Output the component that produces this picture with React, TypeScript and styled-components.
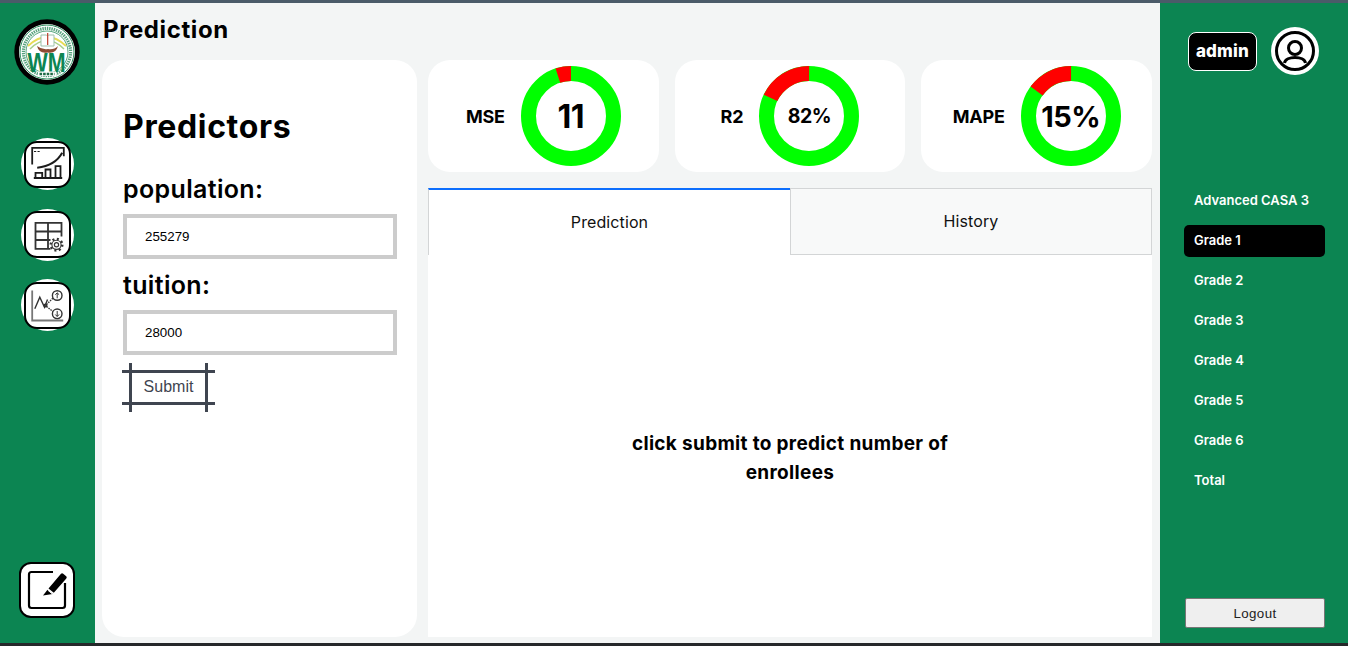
import React from "react";
import styled, { createGlobalStyle } from "styled-components";

const GREEN = "#0c8552";
const HEAD = `"Inter", "Open Sans", "Liberation Sans", sans-serif`;
const ARIAL = `"Liberation Sans", Arial, sans-serif`;

const Global = createGlobalStyle`
  html, body { margin: 0; padding: 0; background: #222; }
  * { box-sizing: border-box; }
  body { font-family: ${HEAD}; overflow: hidden; }
`;

const Frame = styled.div`
  width: 1348px;
  height: 646px;
  display: flex;
  flex-direction: column;
  background: #222;
`;
const TopStrip = styled.div`
  height: 3px;
  background: #4b5b69;
  flex: none;
`;
const BottomStrip = styled.div`
  height: 3px;
  background: #26282a;
  flex: none;
`;
const Body = styled.div`
  flex: 1;
  min-height: 0;
  display: flex;
`;
const LeftRail = styled.nav`
  width: 95px;
  flex: none;
  background: ${GREEN};
  display: flex;
  flex-direction: column;
  align-items: center;
  padding: 16px 0 25px;
`;
const Logo = styled.svg`
  display: block;
  margin-right: 2px;
  flex: none;
`;
const RailIcons = styled.div`
  display: flex;
  flex-direction: column;
  gap: 18.5px;
  margin-top: 53px;
`;
const RailCircle = styled.div`
  width: 53px;
  height: 52px;
  border-radius: 50%;
  background: #fff;
  display: flex;
  align-items: center;
  justify-content: center;
`;
const RailSquare = styled.div`
  width: 47px;
  height: 47px;
  border: 2.5px solid #000;
  border-radius: 13px;
  background: #fff;
  display: flex;
  align-items: center;
  justify-content: center;
`;
const EditButton = styled.div`
  margin: auto 1px 0 0;
  width: 56px;
  height: 56px;
  border: 2px solid #000;
  border-radius: 12px;
  background: #fff;
  display: flex;
  align-items: center;
  justify-content: center;
`;
const Main = styled.main`
  flex: 1;
  min-width: 0;
  background: #f3f5f5;
  display: flex;
  flex-direction: column;
  padding: 0 8px 6px 7px;
`;
const PageTitle = styled.h1`
  height: 57px;
  margin: 0;
  padding: 11px 0 0 1px;
  font-size: 24px;
  line-height: 32px;
  font-weight: 700;
  letter-spacing: 0.6px;
  color: #000;
`;
const Columns = styled.div`
  flex: 1;
  min-height: 0;
  display: grid;
  grid-template-columns: 315px 1fr;
  gap: 11px;
`;
const FormCard = styled.section`
  background: #fff;
  border-radius: 22px;
  padding: 45px 21px 0;
`;
const FormTitle = styled.h2`
  margin: 0 0 24px;
  font-size: 32px;
  line-height: 44px;
  font-weight: 700;
  letter-spacing: 0.65px;
  color: #000;
`;
const FieldLabel = styled.label`
  display: block;
  font-size: 25px;
  line-height: 32px;
  font-weight: 600;
  letter-spacing: 0.35px;
  color: #000;
  height: 41px;
`;
const Field = styled.input`
  display: block;
  width: 274px;
  height: 45px;
  border: 4px solid #ccc;
  background: #fff;
  padding: 0 18px;
  margin-bottom: 10px;
  font-family: ${ARIAL};
  font-size: 13.33px;
  color: #000;
  outline: none;
`;
const Submit = styled.button`
  position: relative;
  display: block;
  width: 93px;
  height: 35px;
  margin: 15px 0 0 -1px;
  padding: 0 0 2px;
  background: #fff;
  border: 0;
  border-top: 3px solid #3f4550;
  border-bottom: 3px solid #3f4550;
  font-family: ${ARIAL};
  font-size: 16px;
  color: #3f4550;
  &::before {
    content: "";
    position: absolute;
    left: 7px;
    right: 7px;
    top: -10px;
    bottom: -10px;
    border-left: 3px solid #3f4550;
    border-right: 3px solid #3f4550;
  }
`;
const RightColumn = styled.div`
  display: flex;
  flex-direction: column;
  min-width: 0;
`;
const Stats = styled.div`
  display: grid;
  grid-template-columns: repeat(3, 1fr);
  gap: 16px;
  margin-bottom: 16px;
`;
const StatCard = styled.div`
  height: 112px;
  background: #fff;
  border-radius: 22px;
  display: flex;
  align-items: center;
  justify-content: center;
  gap: 16px;
`;
const StatLabel = styled.span`
  font-size: 18px;
  font-weight: 700;
  letter-spacing: -0.2px;
  color: #000;
`;
const DonutWrap = styled.div`
  position: relative;
  width: 100px;
  height: 100px;
  flex: none;
`;
const DonutValue = styled.span<{ $size: number }>`
  position: absolute;
  inset: 0;
  display: flex;
  align-items: center;
  justify-content: center;
  font-size: ${(p) => p.$size}px;
  font-weight: 700;
  letter-spacing: -0.5px;
  color: #000;
`;
const Tabs = styled.div`
  display: grid;
  grid-template-columns: 1fr 1fr;
  height: 67px;
  flex: none;
`;
const Tab = styled.div<{ $active?: boolean }>`
  display: flex;
  align-items: center;
  justify-content: center;
  padding-bottom: 2px;
  font-size: 16px;
  letter-spacing: 0.1px;
  color: #111;
  background: ${(p) => (p.$active ? "#fff" : "#f8f9f9")};
  border: 1px solid #d3d5d6;
  border-top: ${(p) => (p.$active ? "2px solid #0d6efd" : "1px solid #d3d5d6")};
  border-bottom: ${(p) => (p.$active ? "0" : "1px solid #d3d5d6")};
  border-right: ${(p) => (p.$active ? "0" : "1px solid #d3d5d6")};
`;
const Panel = styled.div`
  flex: 1;
  background: #fff;
  display: flex;
  align-items: center;
  justify-content: center;
  padding-top: 24px;
`;
const PanelText = styled.p`
  width: 340px;
  margin: 0;
  text-align: center;
  font-size: 19px;
  line-height: 29px;
  font-weight: 700;
  letter-spacing: 0.32px;
  color: #000;
`;
const RightRail = styled.aside`
  width: 188px;
  flex: none;
  background: ${GREEN};
  display: flex;
  flex-direction: column;
  padding: 24px 23px 15px 24px;
`;
const UserRow = styled.div`
  display: flex;
  align-items: center;
  gap: 14px;
  padding-left: 4px;
`;
const AdminBadge = styled.div`
  width: 69px;
  height: 39px;
  background: #000;
  border: 1.5px solid #fff;
  border-radius: 8px;
  color: #fff;
  font-size: 17px;
  font-weight: 800;
  letter-spacing: 0.2px;
  display: flex;
  align-items: center;
  justify-content: center;
`;
const SideNav = styled.ul`
  list-style: none;
  margin: 110px 0 0;
  padding: 0;
  display: flex;
  flex-direction: column;
  gap: 8px;
`;
const SideItem = styled.li<{ $active?: boolean }>`
  height: 32px;
  border-radius: 5px;
  padding: 0 0 2px 10px;
  display: flex;
  align-items: center;
  color: #fff;
  font-size: 13px;
  font-weight: 600;
  background: ${(p) => (p.$active ? "#000" : "transparent")};
`;
const Logout = styled.button`
  margin-top: auto;
  margin-left: 1px;
  width: 140px;
  height: 30px;
  background: #efefef;
  border: 1px solid #767676;
  border-radius: 2px;
  font-family: ${ARIAL};
  font-size: 13.33px;
  letter-spacing: 0.4px;
  color: #222;
`;

function Donut({ red, value, size }: { red: number; value: string; size: number }) {
  const r = 42.5;
  const c = 2 * Math.PI * r;
  const len = (red / 100) * c;
  return (
    <DonutWrap>
      <svg width="100" height="100" viewBox="0 0 100 100">
        <circle cx="50" cy="50" r={r} fill="none" stroke="#00ff00" strokeWidth="15" />
        <circle
          cx="50"
          cy="50"
          r={r}
          fill="none"
          stroke="#ff0000"
          strokeWidth="15"
          strokeDasharray={`${len} ${c - len}`}
          transform={`rotate(${-90 - (red / 100) * 360} 50 50)`}
        />
      </svg>
      <DonutValue $size={size}>{value}</DonutValue>
    </DonutWrap>
  );
}

const grades = ["Advanced CASA 3", "Grade 1", "Grade 2", "Grade 3", "Grade 4", "Grade 5", "Grade 6", "Total"];

export default function App() {
  return (
    <Frame>
      <Global />
      <TopStrip />
      <Body>
        <LeftRail>
          <Logo width="66" height="66" viewBox="0 0 66 66">
            <circle cx="33" cy="33" r="32.7" fill="#000" />
            <circle cx="33" cy="33" r="28" fill="#fff" />
            <circle cx="33" cy="33" r="27" fill="none" stroke="#2f9160" strokeWidth="1" />
            <circle cx="33" cy="33" r="23.6" fill="none" stroke="#2d8a5c" strokeWidth="3.2" strokeDasharray="1.4 0.9" opacity="0.8" />
            <circle cx="33" cy="33" r="21" fill="#fff" stroke="#2f9160" strokeWidth="0.8" />
            <path d="M14 27Q33 9 52 27" fill="none" stroke="#e8dc55" strokeWidth="2" />
            <path d="M16 30Q33 13 50 30" fill="none" stroke="#a9cf8b" strokeWidth="1.5" />
            <path d="M27 16h5.5l1 1 1-1H40v11H27z" fill="#fff" stroke="#9fc0ad" strokeWidth="1" />
            <rect x="33" y="14" width="1.3" height="12" fill="#c24a3a" />
            <path d="M23 27Q25 35 33.5 33.5Q42 35 44 27Q40 31 34 30Q28 31 23 27z" fill="#8d4a33" />
            <text x="32.5" y="53" textAnchor="middle" fontFamily={ARIAL} fontWeight="700" fontSize="27" textLength="38" lengthAdjust="spacingAndGlyphs" fill="#0c8552">WM</text>
            <rect x="24" y="52.5" width="18" height="4.5" fill="#fff" />
            <path d="M25.5 55H40.5" stroke="#1d6a45" strokeWidth="2.4" strokeDasharray="2.6 1" />
          </Logo>
          <RailIcons>
            <RailCircle>
              <RailSquare>
                <svg width="42" height="42" viewBox="2.5 2.5 42 42" fill="none" stroke="#1c1c1c" strokeWidth="1.8">
                  <path d="M7.7 24V7.3H39.3V15.7" />
                  <path d="M9.5 11h2.2M13 11h2.2" strokeWidth="1.2" />
                  <path d="M12.7 27.3C24 26 33 21 37.7 12.3" strokeWidth="2" />
                  <path d="M9.3 37.5H37.7" strokeWidth="2" />
                  <path d="M11 37V32.3H17.7V37M21 37V29H26V37M31 37V25.7H36V37" />
                </svg>
              </RailSquare>
            </RailCircle>
            <RailCircle>
              <RailSquare>
                <svg width="42" height="42" viewBox="2.5 2.5 42 42" fill="none" stroke="#333" strokeWidth="1.8">
                  <path d="M26 37.3H11V11.3H37V25M11 20H37M11 28.5H26M23.5 11.3V37.3" />
                  <circle cx="32" cy="33.3" r="7" fill="#fff" stroke="none" />
                  <circle cx="32" cy="33.3" r="5.8" strokeWidth="2.4" strokeDasharray="2 2.5" />
                  <circle cx="32" cy="33.3" r="4.6" strokeWidth="1.1" />
                  <circle cx="32" cy="33.3" r="2.1" strokeWidth="1.2" />
                </svg>
              </RailSquare>
            </RailCircle>
            <RailCircle>
              <RailSquare>
                <svg width="42" height="42" viewBox="2.5 2.5 42 42" fill="none" stroke="#333" strokeWidth="1.4">
                  <path d="M7.7 9V39H38.7" stroke="#777" strokeWidth="1.8" />
                  <path d="M10.3 27.3L15.3 15.7L20 25.7L23 18" />
                  <circle cx="21" cy="24" r="1.3" />
                  <path d="M22 23L28.5 16.5M22 25L28.5 30" strokeDasharray="1.5 1" />
                  <circle cx="32.7" cy="14" r="4.8" />
                  <circle cx="32.7" cy="32.3" r="4.8" />
                  <path d="M32.7 16.8V11.5M30.8 13.2L32.7 11.3L34.6 13.2M32.7 29.5V34.8M30.8 33L32.7 35L34.6 33" strokeWidth="1" />
                </svg>
              </RailSquare>
            </RailCircle>
          </RailIcons>
          <EditButton>
            <svg width="52" height="52" viewBox="2 2 52 52" fill="none">
              <path d="M34 10H12.5A2.5 2.5 0 0 0 10 12.5V43.5A2.5 2.5 0 0 0 12.5 46H43.5A2.5 2.5 0 0 0 46 43.5V21" stroke="#000" strokeWidth="2.2" />
              <path d="M29.5 26.5L42 11.8a1.5 1.5 0 0 1 2.2-.1l3 2.6a1.5 1.5 0 0 1 .1 2.1L34.8 30.8z" fill="#000" />
              <path d="M28.5 27.8L33.6 32L24 33.5z" fill="#000" />
              <path d="M28.8 28.2L33.2 31.8" stroke="#fff" strokeWidth="1" />
            </svg>
          </EditButton>
        </LeftRail>
        <Main>
          <PageTitle>Prediction</PageTitle>
          <Columns>
            <FormCard>
              <FormTitle>Predictors</FormTitle>
              <FieldLabel>population:</FieldLabel>
              <Field defaultValue="255279" />
              <FieldLabel>tuition:</FieldLabel>
              <Field defaultValue="28000" />
              <Submit>Submit</Submit>
            </FormCard>
            <RightColumn>
              <Stats>
                <StatCard>
                  <StatLabel>MSE</StatLabel>
                  <Donut red={5} value="11" size={32} />
                </StatCard>
                <StatCard>
                  <StatLabel>R2</StatLabel>
                  <Donut red={18} value="82%" size={19.5} />
                </StatCard>
                <StatCard>
                  <StatLabel>MAPE</StatLabel>
                  <Donut red={15} value="15%" size={29} />
                </StatCard>
              </Stats>
              <Tabs>
                <Tab $active>Prediction</Tab>
                <Tab>History</Tab>
              </Tabs>
              <Panel>
                <PanelText>click submit to predict number of enrollees</PanelText>
              </Panel>
            </RightColumn>
          </Columns>
        </Main>
        <RightRail>
          <UserRow>
            <AdminBadge>admin</AdminBadge>
            <svg width="48" height="48" viewBox="0 0 48 48" fill="none" stroke="#000" strokeWidth="3">
              <circle cx="24" cy="24" r="24" fill="#fff" stroke="none" />
              <circle cx="24" cy="24" r="18.5" />
              <circle cx="24" cy="21" r="6.5" />
              <path d="M13.5 36C14.5 28.5 33.5 28.5 34.5 36" />
            </svg>
          </UserRow>
          <SideNav>
            {grades.map((g) => (
              <SideItem key={g} $active={g === "Grade 1"}>{g}</SideItem>
            ))}
          </SideNav>
          <Logout>Logout</Logout>
        </RightRail>
      </Body>
      <BottomStrip />
    </Frame>
  );
}
